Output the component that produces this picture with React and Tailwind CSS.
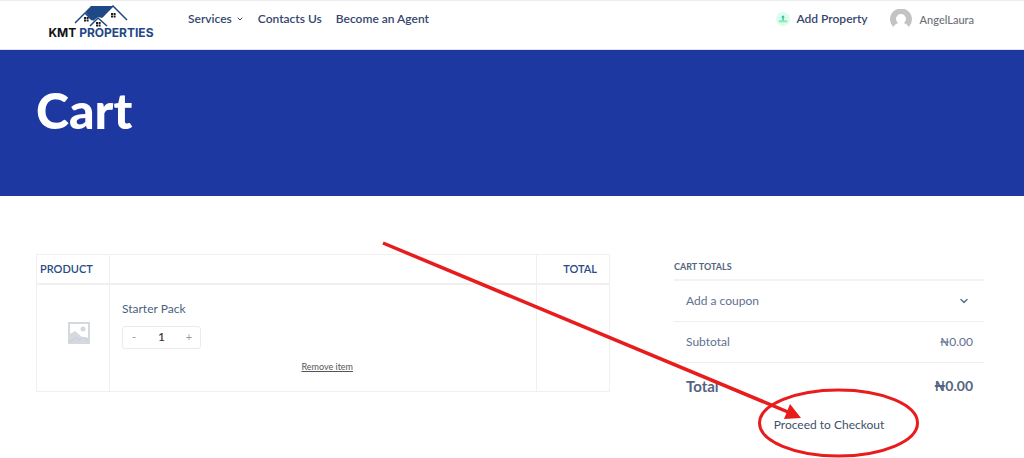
import { ChevronDown } from 'lucide-react'

const NAV_LINKS = ['Contacts Us', 'Become an Agent']

function Logo() {
  return (
    <a href="#" className="flex w-[106px] flex-col items-center">
      <svg width="54" height="24" viewBox="0 0 54 24" aria-hidden="true">
        <path d="M11 7 17 1H39L28 13 24 12 19 16Z" fill="#1f4886" />
        <path d="M11 9 4 16V20H18L19 16ZM39 3 29 13 34 17 36 20H47V10Z" fill="#fff" />
        <path d="M1 18 11 8 18 15M28 12 39 1 53 15" fill="none" stroke="#1f4886" strokeWidth="1.5" />
        <path d="M16 21 24 13 33 21" fill="#fff" stroke="#1f4886" strokeWidth="1.5" />
        <g fill="#161b26">
          <path d="M10 12h2v2h-2zM12.6 12h2v2h-2zM10 14.6h2v2h-2zM12.6 14.6h2v2h-2z" />
          <path d="M37 8h2v2h-2zM39.6 8h2v2h-2zM37 10.6h2v2h-2zM39.6 10.6h2v2h-2z" />
          <path d="M22 17h2v2h-2zM24.6 17h2v2h-2zM22 19.6h2v2h-2zM24.6 19.6h2v2h-2z" />
        </g>
      </svg>
      <span className="-mt-1 font-['Inter',sans-serif] text-[12px] leading-4 font-bold whitespace-nowrap text-[#1f4886]">
        <span className="text-[#111318]">KMT</span> PROPERTIES
      </span>
    </a>
  )
}

function Header() {
  return (
    <header className="flex h-[50px] items-start border-t border-b border-t-[#ececee] border-b-[#e1e2ee] pr-[50px] pl-12 font-['Lato',sans-serif] text-[12px] leading-4 font-semibold text-[#35466f]">
      <div className="pt-1">
        <Logo />
      </div>
      <nav className="ml-[34px] flex gap-[14px] pt-[10px]">
        <a href="#" className="flex items-center gap-1">
          Services
          <ChevronDown size={8} strokeWidth={3} />
        </a>
        {NAV_LINKS.map((link) => (
          <a key={link} href="#">
            {link}
          </a>
        ))}
      </nav>
      <div className="ml-auto flex gap-[22px] pt-2">
        <a href="#" className="flex items-center gap-[6px] self-start pt-[2px]">
          <svg width="14" height="14" viewBox="0 0 15 15" aria-hidden="true">
            <circle cx="7.5" cy="7.5" r="7.5" fill="#dcfdec" />
            <path d="M3 9h9v2H3z" fill="#83eba9" />
            <path d="M7.5 3.5 9.5 6H8.2v3H6.8V6H5.5z" fill="#26bda0" />
          </svg>
          Add Property
        </a>
        <a href="#" className="flex items-center gap-2 text-[11px] font-medium text-[#6c7077]">
          <svg width="22" height="22" viewBox="0 0 22 22" aria-hidden="true">
            <path d="M3 18A11 11 0 1 1 19 18Q17 15 14 14 16 12 16 10A5 5 0 0 0 6 10Q6 12 8 14 5 15 3 18Z" fill="#c3c3c3" />
          </svg>
          AngelLaura
        </a>
      </div>
    </header>
  )
}

function PlaceholderImage() {
  return (
    <svg width="22" height="22" viewBox="0 0 22 22" role="img" aria-label="Starter Pack">
      <path d="M0 0h22v22H0z" fill="#d5d8de" />
      <path d="M2 2h18v14l-2-1-3 1-8-7-5 3z" fill="#fff" />
      <circle cx="15" cy="7" r="2.5" fill="#d5d8de" />
      <path d="M1 20 8 16l3 2 4-3 6 4" fill="none" stroke="#caced6" />
    </svg>
  )
}

function CartTable() {
  return (
    <table className="w-full table-fixed border-collapse border border-[#f0f0f0] text-left">
      <colgroup>
        <col className="w-[73px]" />
        <col />
        <col className="w-[73px]" />
      </colgroup>
      <thead>
        <tr className="h-[29px] border-b-2 border-[#f0f0f0] text-[11px] leading-4 text-[#274b85]">
          <th className="px-[3px] font-semibold">PRODUCT</th>
          <th className="border-x border-[#f0f0f0]" aria-label="Details" />
          <th className="pr-3 text-right font-semibold">TOTAL</th>
        </tr>
      </thead>
      <tbody>
        <tr className="h-[108px] align-top">
          <td className="pt-[37px] pl-[31px]">
            <PlaceholderImage />
          </td>
          <td className="border-x border-[#f0f0f0] px-3 pt-4">
            <a href="#" className="block text-[12px] leading-4 text-[#4b5f80]">
              Starter Pack
            </a>
            <div className="mt-[9px] flex h-[23px] w-[79px] items-center rounded-[3px] border border-[#ebebeb] text-[11px] text-[#999]">
              <button type="button" className="w-[22px]" aria-label="Reduce quantity">
                -
              </button>
              <input
                type="text"
                defaultValue="1"
                aria-label="Quantity"
                className="min-w-0 flex-1 text-center text-[12px] font-medium text-[#333]"
              />
              <button type="button" className="w-[22px]" aria-label="Increase quantity">
                +
              </button>
            </div>
            <div className="flex justify-end pt-3 pr-[171px]">
              <button type="button" className="text-[9px] leading-3 text-[#555] underline">
                Remove item
              </button>
            </div>
          </td>
          <td />
        </tr>
      </tbody>
    </table>
  )
}

function CartTotals() {
  return (
    <section className="text-[12px] leading-4 text-[#60708e]">
      <h2 className="pt-[5px] pb-1 text-[9px] leading-4 font-bold text-[#536482]">CART TOTALS</h2>
      <button
        type="button"
        className="flex h-[42px] w-full items-center justify-between border-t-2 border-[#f3f3f3] pr-[14px] pl-3"
      >
        Add a coupon
        <ChevronDown size={12} strokeWidth={3} />
      </button>
      <div className="flex h-[41px] items-center justify-between border-t border-[#efefef] pr-[11px] pl-3">
        <span>Subtotal</span>
        <span>₦0.00</span>
      </div>
      <div className="flex h-[47px] items-center justify-between border-t border-[#efefef] pr-[11px] pl-3 text-[15px] font-bold text-[#536482]">
        <span>Total</span>
        <span className="text-[14px]">₦0.00</span>
      </div>
      <a href="#" className="mt-2 block text-center text-[#40506b]">
        Proceed to Checkout
      </a>
    </section>
  )
}

// Hand-drawn pointer towards the checkout link
function Annotation() {
  return (
    <svg
      className="pointer-events-none absolute top-0 left-0"
      width="1024"
      height="262"
      viewBox="0 0 1024 262"
      aria-hidden="true"
    >
      <path d="M383 47 788 216" stroke="#e81c1c" strokeWidth="3.5" />
      <path d="M790 208 784 223 801 222Z" fill="#e81c1c" />
      <ellipse cx="838.5" cy="227" rx="79" ry="33" fill="none" stroke="#e81c1c" strokeWidth="3" />
    </svg>
  )
}

export default function App() {
  return (
    <div className="bg-white font-['Lato','Noto_Sans',sans-serif]">
      <Header />
      <div className="h-[146px] bg-[#1e38a1] pt-9 pl-9">
        <h1 className="font-['Lato',sans-serif] text-[50px] leading-[48px] font-black text-white">
          Cart
        </h1>
      </div>
      <main className="relative grid grid-cols-[574fr_310fr] items-start gap-16 pt-[58px] pr-10 pb-7 pl-9">
        <CartTable />
        <CartTotals />
        <Annotation />
      </main>
    </div>
  )
}
